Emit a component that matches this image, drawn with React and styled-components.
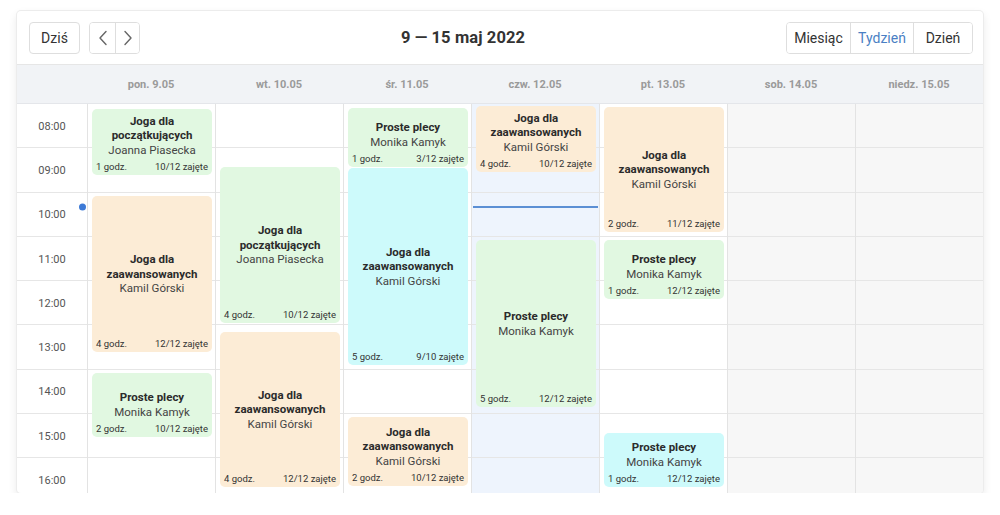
import React from "react";
import styled, { createGlobalStyle } from "styled-components";

const GlobalStyle = createGlobalStyle`
  html, body { margin: 0; padding: 0; background: #ffffff; }
  body { font-family: Roboto, "Noto Sans", "Liberation Sans", sans-serif; color: #333; }
  * { box-sizing: border-box; }
`;

const SLOT = 44.3;
const HOURS = ["08:00", "09:00", "10:00", "11:00", "12:00", "13:00", "14:00", "15:00", "16:00"];

const TONES = {
  green: "#e1f8e1",
  orange: "#fcecd6",
  cyan: "#cdfafb",
};

const days = [
  {
    label: "pon. 9.05",
    kind: "normal",
    events: [
      { top: 5, height: 66, tone: "green", title: "Joga dla początkujących", who: "Joanna Piasecka", dur: "1 godz.", seats: "10/12 zajęte" },
      { top: 92, height: 156, tone: "orange", title: "Joga dla zaawansowanych", who: "Kamil Górski", dur: "4 godz.", seats: "12/12 zajęte" },
      { top: 269, height: 64, tone: "green", title: "Proste plecy", who: "Monika Kamyk", dur: "2 godz.", seats: "10/12 zajęte" },
    ],
  },
  {
    label: "wt. 10.05",
    kind: "normal",
    events: [
      { top: 63, height: 156, tone: "green", title: "Joga dla początkujących", who: "Joanna Piasecka", dur: "4 godz.", seats: "10/12 zajęte" },
      { top: 228, height: 155, tone: "orange", title: "Joga dla zaawansowanych", who: "Kamil Górski", dur: "4 godz.", seats: "12/12 zajęte" },
    ],
  },
  {
    label: "śr. 11.05",
    kind: "normal",
    events: [
      { top: 4, height: 59, tone: "green", title: "Proste plecy", who: "Monika Kamyk", dur: "1 godz.", seats: "3/12 zajęte" },
      { top: 64, height: 197, tone: "cyan", title: "Joga dla zaawansowanych", who: "Kamil Górski", dur: "5 godz.", seats: "9/10 zajęte" },
      { top: 313, height: 69, tone: "orange", title: "Joga dla zaawansowanych", who: "Kamil Górski", dur: "2 godz.", seats: "10/12 zajęte" },
    ],
  },
  {
    label: "czw. 12.05",
    kind: "today",
    now: 103,
    events: [
      { top: 2, height: 66, tone: "orange", title: "Joga dla zaawansowanych", who: "Kamil Górski", dur: "4 godz.", seats: "10/12 zajęte" },
      { top: 136, height: 167, tone: "green", title: "Proste plecy", who: "Monika Kamyk", dur: "5 godz.", seats: "12/12 zajęte" },
    ],
  },
  {
    label: "pt. 13.05",
    kind: "normal",
    events: [
      { top: 3, height: 125, tone: "orange", title: "Joga dla zaawansowanych", who: "Kamil Górski", dur: "2 godz.", seats: "11/12 zajęte" },
      { top: 136, height: 59, tone: "green", title: "Proste plecy", who: "Monika Kamyk", dur: "1 godz.", seats: "12/12 zajęte" },
      { top: 329, height: 54, tone: "cyan", title: "Proste plecy", who: "Monika Kamyk", dur: "1 godz.", seats: "12/12 zajęte" },
    ],
  },
  { label: "sob. 14.05", kind: "weekend", events: [] },
  { label: "niedz. 15.05", kind: "weekend", events: [] },
];

const Page = styled.div`
  padding: 11px 17px 0 17px;
`;

const Card = styled.div`
  width: 966px;
  height: 482px;
  background: #fff;
  border-radius: 4px;
  overflow: hidden;
  box-shadow: 0 0 0 1px #ececec, 0 4px 10px rgba(0, 0, 0, 0.1);
  display: flex;
  flex-direction: column;
`;

const Toolbar = styled.div`
  height: 54px;
  flex: none;
  display: flex;
  align-items: center;
  justify-content: space-between;
  padding: 0 10px 0 12px;
  border-bottom: 1px solid #e6e6e6;
`;

const ToolGroup = styled.div`
  display: flex;
  align-items: center;
  gap: 9px;
`;

const Button = styled.button`
  height: 32px;
  width: 51px;
  padding: 0;
  border: 1px solid #dedede;
  border-radius: 4px;
  background: #fff;
  font-family: Roboto, "Liberation Sans", sans-serif;
  font-size: 14px;
  color: #333;
  display: flex;
  align-items: center;
  justify-content: center;
`;

const Segmented = styled.div`
  display: flex;
  height: 32px;
  border: 1px solid #dedede;
  border-radius: 4px;
  overflow: hidden;
`;

const Segment = styled.button`
  height: 100%;
  width: ${(p) => p.$w}px;
  padding: 0;
  border: none;
  border-left: ${(p) => (p.$first ? "none" : "1px solid #dedede")};
  background: #fff;
  font-family: Roboto, "Liberation Sans", sans-serif;
  font-size: 14px;
  color: ${(p) => (p.$active ? "#4a7fc4" : "#333")};
  display: flex;
  align-items: center;
  justify-content: center;
`;

const Title = styled.h1`
  margin: 0;
  font-size: 16.5px;
  font-weight: 700;
  color: #333;
  letter-spacing: 0.1px;
`;

const DayHeader = styled.div`
  height: 39px;
  flex: none;
  display: grid;
  grid-template-columns: 70px repeat(7, 128px);
  background: #f1f3f6;
  border-bottom: 1px solid #e4e6ea;
`;

const DayLabel = styled.div`
  display: flex;
  align-items: center;
  justify-content: center;
  font-size: 11px;
  font-weight: 700;
  color: #9a9a9a;
`;

const Body = styled.div`
  flex: 1;
  overflow: hidden;
  display: grid;
  grid-template-columns: 70px repeat(7, 128px);
  align-items: start;
`;

const TimeColumn = styled.div`
  position: relative;
`;

const TimeSlot = styled.div`
  height: ${SLOT}px;
  border-bottom: 1px solid #e6e6e6;
  display: flex;
  align-items: center;
  justify-content: center;
  font-size: 11px;
  color: #555;
  padding-top: 1px;
`;

const NowDot = styled.span`
  position: absolute;
  right: 1px;
  width: 7px;
  height: 7px;
  border-radius: 50%;
  background: #3d7ad6;
  transform: translateY(-50%);
`;

const DayColumn = styled.div`
  position: relative;
  border-left: 1px solid #e3e3e3;
  background: ${(p) => (p.$kind === "weekend" ? "#f7f7f7" : p.$kind === "today" ? "#eef4fd" : "#fff")};
`;

const Slot = styled.div`
  height: ${SLOT}px;
  border-bottom: 1px solid #e6e6e6;
`;

const NowLine = styled.div`
  position: absolute;
  left: 1px;
  right: 1px;
  height: 2px;
  background: #5b8fd4;
  transform: translateY(-50%);
`;

const Event = styled.div`
  position: absolute;
  left: 4px;
  right: 3px;
  top: ${(p) => p.$top}px;
  height: ${(p) => p.$height}px;
  background: ${(p) => TONES[p.$tone]};
  border-radius: 5px;
  padding: 0 4px;
  display: grid;
  grid-template-rows: 1fr auto 1fr;
  text-align: center;
  overflow: hidden;
`;

const EventInfo = styled.div`
  grid-row: 2;
  padding: 0 6px;
`;

const EventTitle = styled.div`
  font-size: 11.5px;
  line-height: 14.5px;
  font-weight: 700;
  color: #2b2b2b;
`;

const EventWho = styled.div`
  font-size: 11.5px;
  line-height: 14.5px;
  color: #444;
`;

const EventFooter = styled.div`
  grid-row: 3;
  align-self: end;
  display: flex;
  justify-content: space-between;
  font-size: 9.5px;
  line-height: 12px;
  color: #333;
  padding: 4px 0 2px;
`;

const Chevron = ({ dir }) => (
  <svg width="10" height="16" viewBox="0 0 10 16" fill="none">
    <polyline
      points={dir === "left" ? "8,1.5 2,8 8,14.5" : "2,1.5 8,8 2,14.5"}
      stroke="#666"
      strokeWidth="1.4"
      strokeLinecap="round"
      strokeLinejoin="round"
    />
  </svg>
);

export default function App() {
  const nowTop = 103;
  return (
    <>
      <GlobalStyle />
      <Page>
        <Card>
          <Toolbar>
            <ToolGroup>
              <Button>Dziś</Button>
              <Segmented>
                <Segment $first $w={25}>
                  <Chevron dir="left" />
                </Segment>
                <Segment $w={24}>
                  <Chevron dir="right" />
                </Segment>
              </Segmented>
            </ToolGroup>
            <Title>9 — 15 maj 2022</Title>
            <Segmented>
              <Segment $first $w={63}>Miesiąc</Segment>
              <Segment $active $w={63}>Tydzień</Segment>
              <Segment $w={59}>Dzień</Segment>
            </Segmented>
          </Toolbar>
          <DayHeader>
            <div />
            {days.map((d) => (
              <DayLabel key={d.label}>{d.label}</DayLabel>
            ))}
          </DayHeader>
          <Body>
            <TimeColumn>
              {HOURS.map((h) => (
                <TimeSlot key={h}>{h}</TimeSlot>
              ))}
              <NowDot style={{ top: nowTop }} />
            </TimeColumn>
            {days.map((d) => (
              <DayColumn key={d.label} $kind={d.kind}>
                {HOURS.map((h) => (
                  <Slot key={h} />
                ))}
                {d.now != null && <NowLine style={{ top: d.now }} />}
                {d.events.map((e, i) => (
                  <Event key={i} $top={e.top} $height={e.height} $tone={e.tone}>
                    <EventInfo>
                      <EventTitle>{e.title}</EventTitle>
                      <EventWho>{e.who}</EventWho>
                    </EventInfo>
                    <EventFooter>
                      <span>{e.dur}</span>
                      <span>{e.seats}</span>
                    </EventFooter>
                  </Event>
                ))}
              </DayColumn>
            ))}
          </Body>
        </Card>
      </Page>
    </>
  );
}
